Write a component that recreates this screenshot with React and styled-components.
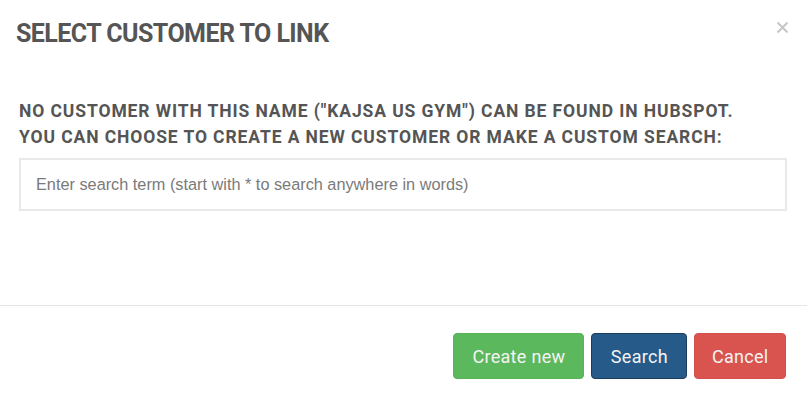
import React from "react";
import styled, { createGlobalStyle } from "styled-components";

const GlobalStyle = createGlobalStyle`
  html, body {
    margin: 0;
    padding: 0;
    background: #fff;
  }
  * {
    box-sizing: border-box;
  }
`;

const Modal = styled.div`
  width: 807px;
  height: 401px;
  display: flex;
  flex-direction: column;
  background: #fff;
  font-family: Roboto, "Liberation Sans", sans-serif;
`;

const Header = styled.div`
  display: flex;
  justify-content: space-between;
  align-items: flex-start;
  padding: 19px 18px 0 16px;
`;

const Title = styled.h4`
  margin: 0;
  font-size: 25px;
  line-height: 30px;
  font-weight: 700;
  color: #555;
  letter-spacing: -0.55px;
`;

const CloseButton = styled.button`
  border: none;
  background: transparent;
  padding: 0;
  margin-top: 2px;
  cursor: pointer;
  display: flex;
`;

const Body = styled.div`
  padding: 49px 20px 0 19px;
  flex: 1;
`;

const Message = styled.p`
  margin: 0;
  font-size: 17.5px;
  line-height: 26px;
  font-weight: 700;
  color: #555;
  letter-spacing: 0.9px;
  white-space: nowrap;
`;

const SearchInput = styled.input`
  display: block;
  width: 100%;
  height: 53px;
  margin-top: 8px;
  padding: 0 15px;
  border: 2px solid #e9e9e9;
  border-radius: 0;
  font-family: "Liberation Sans", Arial, sans-serif;
  font-size: 16.3px;
  color: #555;
  outline: none;

  &::placeholder {
    color: #7a7a7a;
  }
`;

const Footer = styled.div`
  display: flex;
  justify-content: flex-end;
  gap: 7px;
  padding: 27px 21px 22px;
  border-top: 1px solid #e5e5e5;
`;

const tones = {
  success: { bg: "#5cb85c", border: "#58b258" },
  primary: { bg: "#265a88", border: "#1b3d5c" },
  danger: { bg: "#d9534f", border: "#d4504c" },
};

const Button = styled.button`
  height: 46px;
  padding: 0 ${(p) => p.$pad}px;
  border-radius: 4px;
  border: 1px solid ${(p) => tones[p.$tone].border};
  background: ${(p) => tones[p.$tone].bg};
  color: #f4f4f4;
  font-family: Roboto, "Liberation Sans", sans-serif;
  font-size: 18px;
  font-weight: 400;
  letter-spacing: 0.3px;
  cursor: pointer;
`;

function CloseIcon() {
  return (
    <svg width="13" height="13" viewBox="0 0 13 13">
      <path
        d="M1.5 1.5 L11.5 11.5 M11.5 1.5 L1.5 11.5"
        stroke="#c6c6c6"
        strokeWidth="2"
        strokeLinecap="butt"
      />
    </svg>
  );
}

export default function App() {
  return (
    <>
      <GlobalStyle />
      <Modal>
        <Header>
          <Title>SELECT CUSTOMER TO LINK</Title>
          <CloseButton aria-label="Close">
            <CloseIcon />
          </CloseButton>
        </Header>
        <Body>
          <Message>
            NO CUSTOMER WITH THIS NAME ("KAJSA US GYM") CAN BE FOUND IN HUBSPOT.
            <br />
            YOU CAN CHOOSE TO CREATE A NEW CUSTOMER OR MAKE A CUSTOM SEARCH:
          </Message>
          <SearchInput placeholder="Enter search term (start with * to search anywhere in words)" />
        </Body>
        <Footer>
          <Button $tone="success" $pad={18}>Create new</Button>
          <Button $tone="primary" $pad={18.5}>Search</Button>
          <Button $tone="danger" $pad={16.5}>Cancel</Button>
        </Footer>
      </Modal>
    </>
  );
}
